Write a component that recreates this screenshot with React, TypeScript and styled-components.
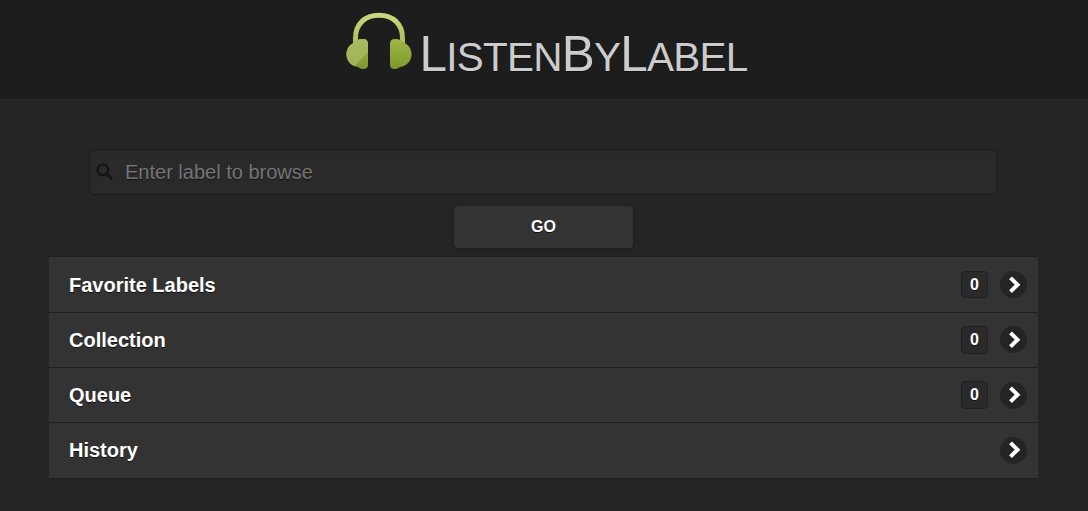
import { useState, ChangeEvent, FormEvent } from 'react';
import styled, { createGlobalStyle } from 'styled-components';

interface ListEntry {
  title: string;
  count?: number;
}

const entries: ListEntry[] = [
  { title: 'Favorite Labels', count: 0 },
  { title: 'Collection', count: 0 },
  { title: 'Queue', count: 0 },
  { title: 'History' },
];

const GlobalStyle = createGlobalStyle`
  * {
    box-sizing: border-box;
  }

  body {
    margin: 0;
    background: #252525;
    color: #fff;
    font-family: "Liberation Sans", Arial, sans-serif;
    text-shadow: 0 1px 0 #111;
  }
`;

const Header = styled.header`
  display: flex;
  justify-content: center;
  height: 99px;
  padding-top: 8px;
  background: #1d1d1d;
  border-bottom: 1px solid #1b1b1b;
`;

const Logo = styled.svg`
  width: 80px;
  height: 70px;
  flex: none;
`;

const Title = styled.h1`
  margin: 21px 0 0 -1px;
  color: #ccc;
  font-size: 40.5px;
  font-weight: normal;
  letter-spacing: -0.75px;
  line-height: 50px;
  white-space: nowrap;
  text-transform: uppercase;
`;

const Initial = styled.span`
  font-size: 49.5px;
`;

const Content = styled.main`
  padding: 50px 50px 32px 49px;
`;

const SearchForm = styled.form`
  display: flex;
  flex-direction: column;
  align-items: center;
  gap: 11px;
  padding: 0 40px 8.4px;
`;

const SearchField = styled.label`
  display: flex;
  align-items: center;
  width: 100%;
  height: 46px;
  padding: 0 6px;
  background: #2a2a2a;
  border: 1px solid #1d1d1d;
  border-radius: 5px;
  box-shadow: inset 0 1px 3px rgba(0, 0, 0, 0.2);
`;

const SearchInput = styled.input`
  flex: 1;
  margin-left: 11px;
  padding: 0;
  background: transparent;
  border: 0;
  outline: 0;
  color: #fff;
  font: 20px "Liberation Sans", Arial, sans-serif;
  text-shadow: inherit;

  &::placeholder {
    color: #757575;
  }
`;

const GoButton = styled.button`
  width: 179px;
  height: 42px;
  padding: 0 0 1px;
  background: #333;
  border: 0;
  border-radius: 4px;
  box-shadow: 0 0 0 1px #202020, 0 1px 4px rgba(0, 0, 0, 0.15);
  color: #fff;
  font: bold 16px "Liberation Sans", Arial, sans-serif;
  text-shadow: inherit;
  cursor: pointer;
`;

const List = styled.ul`
  margin: 0;
  padding: 0;
  list-style: none;
  border-bottom: 1px solid #1f1f1f;
`;

const ListRow = styled.li`
  display: flex;
  align-items: center;
  height: 55.3px;
  padding: 0 11px 0 20px;
  background: #333;
  border-top: 1px solid #1f1f1f;
  font-size: 20px;
  font-weight: bold;
`;

const RowTitle = styled.span`
  flex: 1;
  padding-top: 1px;
`;

const Count = styled.span`
  width: 27px;
  height: 27.4px;
  margin-right: 12px;
  background: #2a2a2a;
  border: 1px solid #1f1f1f;
  border-radius: 4px;
  font-size: 16px;
  line-height: 26px;
  text-align: center;
`;

const Arrow = styled.span`
  display: flex;
  align-items: center;
  justify-content: center;
  width: 27px;
  height: 27px;
  background: #242424;
  border-radius: 50%;
`;

const Headphones = () => (
  <Logo viewBox="0 0 80 70" aria-hidden="true">
    <defs>
      <linearGradient id="band" x1="0" y1="0" x2="0" y2="1">
        <stop offset="0" stopColor="#c9d87e" />
        <stop offset="1" stopColor="#a5b950" />
      </linearGradient>
      <linearGradient id="cup" x1="0" y1="0" x2="0" y2="1">
        <stop offset="0" stopColor="#9fb546" />
        <stop offset="1" stopColor="#7f972b" />
      </linearGradient>
      <linearGradient id="shine" x1="0" y1="0" x2="0" y2="1">
        <stop offset="0" stopColor="#a9bc63" />
        <stop offset="1" stopColor="#9db155" />
      </linearGradient>
      <clipPath id="left">
        <path d="M12 36C15 33 18 31 23 31Q28 31 28 36V57Q28 61 23 61Q20 61 18 59C11 58 6.500 53 6.500 46.500C6.500 42 8.500 38 12 36Z" />
      </clipPath>
    </defs>
    <path d="M15.500 39V30C15.500 16 25 7.200 39 7.200S62.500 16 62.500 30V39" fill="none" stroke="url(#band)" strokeWidth="5" />
    <g clipPath="url(#left)">
      <rect x="6" y="30" width="23" height="32" fill="url(#cup)" />
      <path d="M6 30H29V43L14 59L6 62Z" fill="url(#shine)" />
    </g>
    <path d="M66 36C63 33 60 31 55 31Q50 31 50 36V57Q50 61 55 61Q58 61 60 59C67 58 71.500 53 71.500 46.500C71.500 42 69.500 38 66 36Z" fill="url(#cup)" />
  </Logo>
);

const SearchIcon = () => (
  <svg width="18" height="18" viewBox="0 0 18 18" aria-hidden="true">
    <circle cx="6.800" cy="6.800" r="5.300" fill="none" stroke="#151515" strokeWidth="2.500" />
    <path d="M10.600 10.600L16 16" stroke="#151515" strokeWidth="2.800" />
  </svg>
);

const ArrowIcon = () => (
  <svg width="18" height="18" viewBox="0 0 18 18" aria-hidden="true">
    <path d="M5.500 1.800L12.500 8.700L5.500 15.600" fill="none" stroke="#fff" strokeWidth="4" />
  </svg>
);

const App: React.FC = () => {
  const [label, setLabel] = useState('');

  const handleChange = (event: ChangeEvent<HTMLInputElement>) => {
    setLabel(event.target.value);
  };

  const handleSubmit = (event: FormEvent<HTMLFormElement>) => {
    event.preventDefault();
  };

  return (
    <>
      <GlobalStyle />
      <Header>
        <Headphones />
        <Title>
          <Initial>L</Initial>isten<Initial>B</Initial>y<Initial>L</Initial>abel
        </Title>
      </Header>
      <Content>
        <SearchForm onSubmit={handleSubmit}>
          <SearchField>
            <SearchIcon />
            <SearchInput value={label} onChange={handleChange} placeholder="Enter label to browse" />
          </SearchField>
          <GoButton type="submit">GO</GoButton>
        </SearchForm>
        <List>
          {entries.map(entry => (
            <ListRow key={entry.title}>
              <RowTitle>{entry.title}</RowTitle>
              {entry.count !== undefined && <Count>{entry.count}</Count>}
              <Arrow>
                <ArrowIcon />
              </Arrow>
            </ListRow>
          ))}
        </List>
      </Content>
    </>
  );
};

export default App;
